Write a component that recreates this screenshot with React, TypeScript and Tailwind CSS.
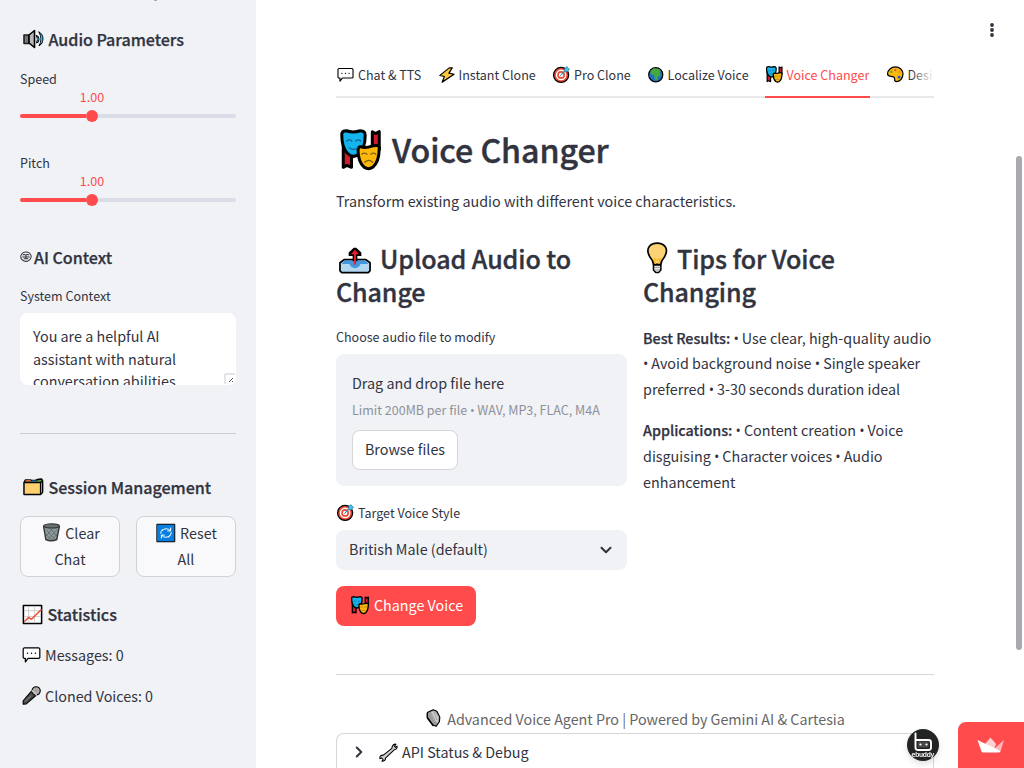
import type { ReactNode } from "react";
import { ChevronDown, ChevronRight } from "lucide-react";

function Icon({ size, children, className = "" }: { size: number; children: ReactNode; className?: string }) {
  return (
    <svg
      width={size}
      height={size}
      viewBox="0 0 24 24"
      fill="none"
      stroke="#000"
      strokeWidth="1.6"
      strokeLinejoin="round"
      strokeLinecap="round"
      className={"shrink-0 " + className}
    >
      {children}
    </svg>
  );
}

type P = { size: number; className?: string };

const Speaker = (p: P) => (
  <Icon {...p}>
    <path d="M3 8h5v8.500H3z" fill="#777" stroke="#222" />
    <path d="M8 8l5.500-4.500v17L8 16z" fill="#b8b8b8" />
    <path d="M15.500 8.500q2 4 0 7.500q2.500 0 2.500-3.700t-2.500-3.800M18 5q4 7 0 14q4-2 4-7t-4-7" fill="#2bb9e8" strokeWidth="1" />
    <path d="M16.800 12h.01M20.500 9v6" stroke="#2bb9e8" strokeWidth="1.300" />
  </Icon>
);
const Dividers = (p: P) => (
  <Icon {...p}>
    <path d="M3.500 6.500l1-1.500h5l1 .5h4l2-1 4-.5 1 1.500v11l-2 2H3.500z" fill="#5c9e31" strokeWidth="1.400" />
    <path d="M5 6l4-.5" stroke="#ea5a47" strokeWidth="1.500" />
    <path d="M11 6.200h4" stroke="#2b8be4" strokeWidth="1.300" />
    <path d="M3 7.500h16.500l2-1.500v11.500L19.500 19.500H3z" fill="#fcd06f" strokeWidth="1.400" />
    <path d="M19.500 8v11" strokeWidth="1.200" />
  </Icon>
);
const Trash = (p: P) => (
  <Icon {...p}>
    <path d="M3 5l2.500 15q6 3 12.500 0L21 5z" fill="#8d999b" stroke="#333" />
    <ellipse cx="12" cy="4.500" rx="9" ry="2.300" fill="#667073" stroke="#333" strokeWidth="1.300" />
    <path d="M6 9l9 10M11 8l7 8M5.500 14l6 6M18 9l-9 10M13 8l-7 8M19 13l-6 7" stroke="#4f595c" strokeWidth=".7" />
  </Icon>
);
const Reset = (p: P) => (
  <Icon {...p}>
    <path d="M1.500 1.500h21v21h-21z" fill="#087fe0" strokeWidth="1.200" />
    <path d="M7.500 9A6 6 0 0 1 17 9M18.300 11.500A6 6 0 0 1 15 17M16.500 15A6 6 0 0 1 7 15M5.700 12.500A6 6 0 0 1 7.500 8M17.500 6v3.500H14M6.500 18v-3.500H10" stroke="#fff" strokeWidth="1.200" />
  </Icon>
);
const Chart = (p: P) => (
  <Icon {...p}>
    <path d="M2.500 2.500h19v19h-19z" fill="#fff" />
    <path d="M8 3.500v17M14 3.500v17M3.500 8h17M3.500 14h17" stroke="#ccc" strokeWidth="1" />
    <path d="M4 19l4-4 3 2 10-10" stroke="#ea4a35" strokeWidth="1.500" />
  </Icon>
);
const Chat = (p: P) => (
  <Icon {...p}>
    <path d="M3.500 4.500h17l1 1v10l-1 1H8l-3 4v-4H3.500l-1-1v-10z" fill="#fff" strokeWidth="1.400" />
    <path d="M7.500 10.500h.01M12 10.500h.01M16.500 10.500h.01" strokeWidth="1.700" />
  </Icon>
);
const Mic = (p: P) => (
  <Icon {...p}>
    <path d="M12 7l5 5L6 21.500 2.500 22v-4z" fill="#4a4a4a" strokeWidth="1.300" />
    <circle cx="17.300" cy="6.700" r="4.700" fill="#a9a9a8" strokeWidth="1.300" />
    <path d="M12.800 6.500l4.800 4.800" stroke="#d0cfce" />
    <path d="M5 18.500l6-6" stroke="#999" strokeWidth="1" />
  </Icon>
);
const Bolt = (p: P) => (
  <Icon {...p}>
    <path d="M15 2.500L2.500 12.500l6 1.500-3 7.500 16-10.500-7-1.500 4.500-7z" fill="#fcca3f" />
  </Icon>
);
const Target = (p: P) => (
  <Icon {...p}>
    <circle cx="11.500" cy="12.500" r="9.500" fill="#ef4a35" />
    <circle cx="11.500" cy="12.500" r="5.800" stroke="#fff" strokeWidth="1.800" />
    <circle cx="11.500" cy="12.500" r="2" fill="#fff" stroke="#fff" />
    <path d="M11 13l5-6V4.500L19 2l1 2.200 2 .8-2.500 3.500h-3z" fill="#45c5ed" stroke="#1f7fa8" strokeWidth=".9" />
  </Icon>
);
const Globe = (p: P) => (
  <Icon {...p}>
    <circle cx="12" cy="12" r="9.700" fill="#1e6fc1" />
    <path d="M5 6l4-3 8 1 2 4-2 2 2 2-4 3-1 5-3-1-1-6-5-2z" fill="#46a83c" stroke="none" />
  </Icon>
);
const Palette = (p: P) => (
  <Icon {...p}>
    <path d="M12 2.500c6 0 10 4 10 9s-3 10-8 10c-5 0-1-4-4-6-3-2-8 1-8-4 0-5 5-9 10-9z" fill="#fcb80b" />
    <circle cx="7" cy="9" r="1.500" fill="#4aa944" stroke="none" />
    <circle cx="12" cy="6.500" r="1.600" fill="#ea5a47" stroke="none" />
    <circle cx="17.500" cy="9" r="1.500" fill="#e09523" stroke="none" />
    <circle cx="17" cy="16" r="1.900" fill="#245fd8" stroke="none" />
  </Icon>
);
const Masks = (p: P) => (
  <Icon {...p}>
    <path d="M2.800 8v13.500l1.900-1 2.500 1V14z" fill="#d21b2f" />
    <path d="M18.300 12V2.500l1.700 1 2-1V12z" fill="#d21b2f" />
    <path d="M2 4q0-2 2.500-2Q8 3.300 12 2q2.500 0 2.500 2.500 0 7-3.500 10-3 2.500-6-.5Q2 11 2 4z" fill="#14b5ee" />
    <path d="M11.800 10.500q3 1 6.200-.3 4-1 4 1 0 7.500-3.500 10.300-2.200 1.500-4.500 0-3.300-3-3.300-9.300 0-1.500 1.100-1.700z" fill="#fcb80b" />
    <path d="M4.700 7.500q1.300-1.300 2.700 0M9.500 7.500q1.300-1.300 2.600 0M6 11q2.300 2 4.500 0" stroke="#17628b" strokeWidth=".7" />
    <path d="M12.700 14.500q1.400-1.200 2.700 0M17.500 14.500q1.400-1.200 2.700 0M14.300 18.800q2.200-2 4.200 0" stroke="#806018" strokeWidth=".7" />
  </Icon>
);
const Outbox = (p: P) => (
  <Icon {...p}>
    <path d="M5.300 13h13.400l2.800 2v5l-1 1.200h-17l-1-1.200v-5z" fill="#b1d8f0" strokeWidth="1.100" />
    <path d="M5.500 13.600h13l2 2.200h-5q-1 2.600-3.500 2.600t-3.500-2.600h-5z" fill="#4397df" stroke="none" />
    <path d="M10.500 14v-3.300H8V8.500L11.200 5.500h1.600L16 8.500v2.200h-2.500V14" fill="#000" stroke="none" />
    <path d="M11.400 16.200V9.700H9.500L12 6.800l2.500 2.900h-1.900v6.500z" fill="#ee1d2b" stroke="none" />
  </Icon>
);
const Bulb = (p: P) => (
  <Icon {...p}>
    <path d="M7.400 16.500Q7.200 14 5 11.500C.8 4.500 6 1.500 10 1.500s9.200 3 5 10Q12.800 14 12.600 16.500z" fill="#fcd276" strokeWidth="1.200" />
    <path d="M8.700 15.800L8 12.500l2 1 2-1-.7 3.300" stroke="#fcb81c" strokeWidth="1" />
    <path d="M7.400 17h5.200v3.500L11 22.300H9l-1.600-1.800z" fill="#eee" strokeWidth="1.100" />
    <path d="M8 18.600h4M8.200 20.400h3.500" stroke="#888" strokeWidth=".6" />
  </Icon>
);
const Studio = (p: P) => (
  <Icon {...p}>
    <path d="M4 5.500L11 2l4.500 2 3.500 7-.5 5.500L14.500 22 10 20 4 11z" fill="#9b9b9a" strokeWidth="1.300" />
    <path d="M8 5.500L12 3.500l5.500 7-1 7.500-4-2z" fill="#d0cfce" stroke="none" />
    <path d="M9 6l5 11M12 5l3.500 9" stroke="#888" strokeWidth=".8" />
    <path d="M4 7v5l7 9" />
  </Icon>
);
const Wrench = (p: P) => (
  <Icon {...p}>
    <path d="M16.500 4.500q1.500-2.500 4-2l-1.700 2.500L20 6.200l1.800-1.500q.4 3.800-3.300 4.200L8.500 18.300q.3 3.700-4 3.700l1.300-2-1.700-1.800-2 .8q-.3-4.300 4-4L15.800 7.300z" fill="#d0cfce" strokeWidth="1.200" />
  </Icon>
);
const Brain = () => (
  <svg width="12" height="12" viewBox="0 0 13 12" fill="none" stroke="#31333f" strokeWidth="1.100" className="shrink-0">
    <path d="M3 1.500q3.500-2 7 0 2.500 2 2 5-1 3-3 3.500-2.500 1.500-5 0Q1 9 .8 6 1 3 3 1.500zM3 4q1.500-1.500 3.300 0Q8 2.500 10 4M2.500 6h8M4 8h5M6.500 4v4" />
  </svg>
);

function Slider({ label }: { label: string }) {
  return (
    <div className="h-[84px]">
      <div className="h-5 text-[12.53px] leading-5">{label}</div>
      <div className="ml-[52px] w-10 text-center text-[12.53px] leading-[15px] text-[#ff4b4b]">1.00</div>
      <div className="mt-[6px] flex h-3 items-center">
        <div className="h-1 w-[66px] rounded-l-full bg-[#ff4b4b]" />
        <div className="size-3 rounded-full bg-[#ff4b4b]" />
        <div className="h-1 flex-1 rounded-r-full bg-[#dadde7]" />
      </div>
    </div>
  );
}

const h3 =
  "flex items-center gap-[4px] pl-[0.5px] whitespace-nowrap text-[16.1px] font-medium leading-6 tracking-[-0.04px] [-webkit-text-stroke:0.25px]";
const h2 =
  "whitespace-nowrap text-[25.07px] font-medium leading-[33px] tracking-[-0.1px] [-webkit-text-stroke:0.35px]";
const strong = "font-medium [-webkit-text-stroke:0.25px]";

function Dot() {
  return <span className="inline-block w-[0.36em] text-center font-['Open_Sans',sans-serif] leading-none">•</span>;
}

function Sidebar() {
  return (
    <aside className="flex w-64 shrink-0 flex-col bg-[#f0f2f6] px-5">
      <div className="ml-[134px] h-px w-[3px] bg-[#a9abb3]" />
      <h3 className={h3 + " mt-[26px]"}><Speaker size={24} />Audio Parameters</h3>
      <div className="mt-[18px]"><Slider label="Speed" /><Slider label="Pitch" /></div>
      <h3 className="mt-2 flex items-center gap-[2px] text-[16.1px] font-medium leading-6 tracking-[-0.04px] [-webkit-text-stroke:0.25px]"><Brain />AI Context</h3>
      <div className="mt-[17px] text-[12.53px] leading-5">System Context</div>
      <div className="relative mt-[7px] h-[72px] overflow-hidden rounded-lg bg-white px-[13px] pt-3 text-[14.33px] leading-[22.6px]">
        You are a helpful AI<br />assistant with natural<br />conversation abilities.
        <svg className="absolute bottom-0 right-0" width="12" height="12" fill="none">
          <path d="M1 11V1h10" stroke="#c8cad0" />
          <path d="M5 9l4-4M8 9l1-1" stroke="#555" />
        </svg>
      </div>
      <hr className="mt-12 border-[#cdcfd5]" />
      <h3 className={h3 + " mt-[41px]"}><Dividers size={24} />Session Management</h3>
      <div className="mt-[17px] flex gap-4 text-center text-[14.33px] leading-[25.6px]">
        <div className="h-[61px] w-[100px] rounded-lg border border-[#d0d2d8] bg-[#f9f9fb] pt-[3px]">
          <div className="flex items-center justify-center gap-[3px] pl-px"><Trash size={21} />Clear</div>Chat
        </div>
        <div className="h-[61px] w-[100px] rounded-lg border border-[#d0d2d8] bg-[#f9f9fb] pt-[3px]">
          <div className="flex items-center justify-center gap-1 pl-px"><Reset size={20} />Reset</div>All
        </div>
      </div>
      <h3 className={h3 + " mt-[25px]"}><Chart size={23} />Statistics</h3>
      <div className="mt-4 flex items-center gap-[3.5px] pl-[0.5px] text-[14.33px] leading-[25.6px]"><Chat size={21} />Messages: 0</div>
      <div className="mt-[15px] flex items-center gap-[3.5px] pl-[0.5px] text-[14.33px] leading-[25.6px]"><Mic size={21} />Cloned Voices: 0</div>
    </aside>
  );
}

function Tabs() {
  const tab = "flex shrink-0 items-center gap-[3px] whitespace-nowrap pb-[7px]";
  return (
    <nav className="relative flex h-10 shrink-0 gap-4 overflow-hidden text-[12.53px] leading-5 shadow-[inset_0_-2px_0_#e9e9eb]">
      <div className={tab + " w-[85.5px]"}><Chat size={19} />Chat &amp; TTS</div>
      <div className={tab + " w-[98.5px]"}><Bolt size={18} />Instant Clone</div>
      <div className={tab + " w-[79px]"}><Target size={19} />Pro Clone</div>
      <div className={tab + " w-[102px]"}><Globe size={17.5} />Localize Voice</div>
      <div className={tab + " w-[105px] text-[#ff4b4b] shadow-[inset_0_-2px_0_#ff4b4b]"}><Masks size={18.5} />Voice Changer</div>
      <div className={tab}><Palette size={18.5} />Desi</div>
      <div className="absolute right-0 top-0 h-[38px] w-6 bg-gradient-to-r from-white/0 to-white" />
    </nav>
  );
}

function Buddy() {
  return (
    <svg className="absolute left-[899px] top-[721px] drop-shadow-md" width="48" height="48" viewBox="0 0 48 48">
      <circle cx="24" cy="24" r="16" fill="#222423" />
      <path d="M16.500 12.500v14q0 2.500 2.500 2.500h10.500q2.500 0 2.500-2.500v-5q0-2.500-2.500-2.500H17" fill="none" stroke="#fff" strokeWidth="1.900" strokeLinecap="round" />
      <path d="M19 20.500h10.500v6H19z" fill="#4a4a4a" />
      <circle cx="21.500" cy="23.500" r="1.100" fill="#fff" />
      <circle cx="27.500" cy="23.500" r="1.100" fill="#fff" />
      <text x="24" y="35.500" textAnchor="middle" fontSize="6.500" fontWeight="700" fontFamily="Inter, sans-serif" fill="#eee" textLength="23">ebuddy</text>
    </svg>
  );
}

export default function App() {
  return (
    <div className="relative flex h-[768px] w-[1024px] overflow-hidden bg-white font-['Noto_Sans_CJK_SC',sans-serif] text-[#31333f]">
      <Sidebar />
      <main className="ml-20 flex w-[598px] shrink-0 flex-col pt-[58px]">
        <Tabs />
        <h1 className="mt-[27px] flex h-12 shrink-0 items-center gap-[9px] pl-[2px] text-[32.2px] font-medium leading-[48px] tracking-[-0.08px] [-webkit-text-stroke:0.4px]"><Masks size={45} />Voice Changer</h1>
        <p className="mt-[15px] text-[14.33px] leading-[25.6px]">Transform existing audio with different voice characteristics.</p>
        <div className="mt-[28px] grid grid-cols-2 gap-4">
          <section>
            <h2 className={h2}>
              <div className="flex h-[33px] items-center gap-[6px]"><Outbox size={38} />Upload Audio to</div>Change
            </h2>
            <div className="mt-[19px] text-[12.53px] leading-5">Choose audio file to modify</div>
            <div className="mt-[7px] h-[132px] rounded-lg bg-[#f0f2f6] px-4 pt-4">
              <div className="text-[14.33px] leading-[25.6px]">Drag and drop file here</div>
              <div className="mt-1 text-[12.53px] leading-[21px] text-[#8f9199]">Limit 200MB per file <Dot /> WAV, MP3, FLAC, M4A</div>
              <div className="mt-[9.5px] flex h-10 w-[106px] items-center justify-center rounded-lg border border-[#d6d6d9] bg-white pb-px text-[14.33px]">Browse files</div>
            </div>
            <div className="mt-[17px] flex items-center gap-[3px] text-[12.53px] leading-5"><Target size={19} />Target Voice Style</div>
            <div className="mt-[7px] flex h-10 items-center justify-between rounded-lg bg-[#f0f2f6] pl-[13px] pr-3 text-[14.33px]">
              <span className="pb-[2px]">British Male (default)</span><ChevronDown size={18} strokeWidth={2.7} />
            </div>
            <div className="mt-4 flex h-10 w-[140px] items-center justify-center gap-1 rounded-lg bg-[#ff4b4b] pb-[2px] pl-px text-[14.33px] text-white"><Masks size={20} />Change Voice</div>
          </section>
          <section>
            <h2 className={h2}>
              <div className="flex h-[33px] items-center"><Bulb size={34} />Tips for Voice</div>Changing
            </h2>
            <p className="mt-[17px] whitespace-nowrap text-[14.33px] leading-[25.6px]"><b className={strong}>Best Results:</b> <Dot /> Use clear, high-quality audio<br /><Dot /> Avoid background noise <Dot /> Single speaker<br />preferred <Dot /> 3-30 seconds duration ideal</p>
            <p className="mt-4 whitespace-nowrap text-[14.33px] leading-[25.6px]"><b className={strong}>Applications:</b> <Dot /> Content creation <Dot /> Voice<br />disguising <Dot /> Character voices <Dot /> Audio<br />enhancement</p>
          </section>
        </div>
        <hr className="mt-12 border-[#d6d6d9]" />
        <div className="mt-[31px] flex items-center justify-center gap-[3px] text-[14.33px] leading-[25.6px] tracking-[-0.02px] text-[#666]"><Studio size={20} className="-ml-px" />Advanced Voice Agent Pro | Powered by Gemini AI &amp; Cartesia</div>
        <div className="mt-[1.4px] flex h-12 shrink-0 items-center rounded-t-lg border border-b-0 border-[#d6d6d9] pb-[10px] pl-[13px] text-[14.33px]">
          <ChevronRight size={18} strokeWidth={2.7} /><Wrench size={21} className="ml-[10px] mr-[3px]" />API Status &amp; Debug
        </div>
      </main>
      <svg className="absolute left-[986px] top-5" width="12" height="20" fill="#31333f">
        <circle cx="6" cy="5" r="1.900" /><circle cx="6" cy="10" r="1.900" /><circle cx="6" cy="15" r="1.900" />
      </svg>
      <div className="absolute left-[1016px] top-[156px] h-[494px] w-1.5 rounded-full bg-[#a9aaaf]" />
      <Buddy />
      <div className="absolute bottom-0 right-0 h-[46px] w-[66px] rounded-tl-lg bg-[#ff4b4b]">
        <svg width="66" height="46">
          <path d="M27 22l5.500-6.500L38 22l-3 8z" fill="#ffd0d2" />
          <path d="M46 18l-3.500 11.500H33z" fill="#ffb5ba" />
          <path d="M19.500 18L42.500 29l-1 1.500H25q-1 0-1.500-1z" fill="#fff" />
        </svg>
      </div>
    </div>
  );
}
